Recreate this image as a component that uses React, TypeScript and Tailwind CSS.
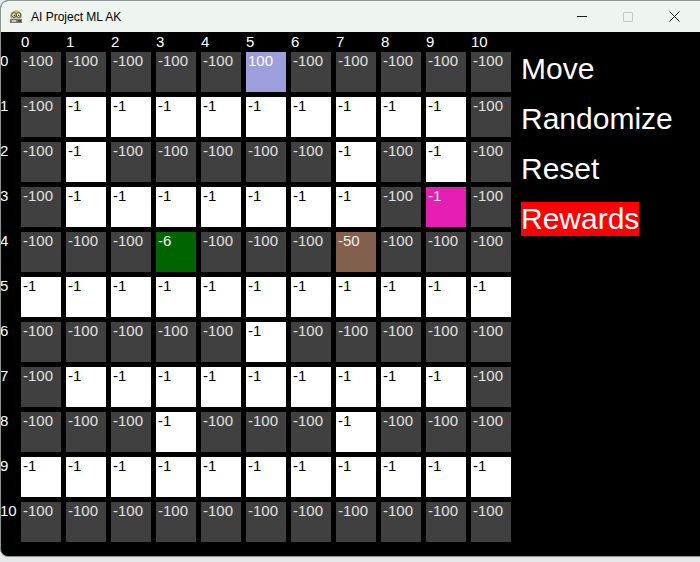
import React from "react";

const grid: number[][] = [
  [-100, -100, -100, -100, -100, 100, -100, -100, -100, -100, -100],
  [-100, -1, -1, -1, -1, -1, -1, -1, -1, -1, -100],
  [-100, -1, -100, -100, -100, -100, -100, -1, -100, -1, -100],
  [-100, -1, -1, -1, -1, -1, -1, -1, -100, -1, -100],
  [-100, -100, -100, -6, -100, -100, -100, -50, -100, -100, -100],
  [-1, -1, -1, -1, -1, -1, -1, -1, -1, -1, -1],
  [-100, -100, -100, -100, -100, -1, -100, -100, -100, -100, -100],
  [-100, -1, -1, -1, -1, -1, -1, -1, -1, -1, -100],
  [-100, -100, -100, -1, -100, -100, -100, -1, -100, -100, -100],
  [-1, -1, -1, -1, -1, -1, -1, -1, -1, -1, -1],
  [-100, -100, -100, -100, -100, -100, -100, -100, -100, -100, -100],
];

// special squares (agent, goal, etc)
const specials: Record<string, string> = {
  "0-5": "bg-[#9c9fdb] text-white",
  "3-9": "bg-[#e61eb4] text-[#f2f2f2]",
  "4-3": "bg-[#006400] text-white",
  "4-7": "bg-[#82604d] text-[#eeeeee]",
};

const cellClass = (r: number, c: number, v: number) => {
  const key = `${r}-${c}`;
  if (specials[key]) return specials[key];
  return v === -1 ? "bg-white text-black" : "bg-[#404040] text-[#e0e0e0]";
};

const PygameIcon = () => (
  <svg width="16" height="16" viewBox="0 0 16 16">
    <path d="M3 9 C2 5 4 2 8 2 C12 2 14 5 13 9 Z" fill="#f2d21b" stroke="#8a7410" strokeWidth="0.6" />
    <circle cx="6" cy="6" r="2.3" fill="#fff" stroke="#333" strokeWidth="0.9" />
    <circle cx="10.5" cy="6" r="2.3" fill="#fff" stroke="#333" strokeWidth="0.9" />
    <circle cx="6.3" cy="6.2" r="0.8" fill="#222" />
    <circle cx="10.7" cy="6.2" r="0.8" fill="#222" />
    <path d="M2 10 H14 V14 H2 Z" fill="#7a7a6e" />
    <path d="M4 11 H8 V13 H4 Z" fill="#c9c9b8" />
    <path d="M10 11 H13 V13 H10 Z" fill="#4b4b44" />
  </svg>
);

const TitleBar = () => (
  <div className="h-[31px] flex items-center bg-[#eef4f0] shrink-0">
    <div className="ml-[7px] flex items-center">
      <PygameIcon />
    </div>
    <span className="ml-[7px] text-[12px] text-black">AI Project ML AK</span>
    <div className="ml-auto flex h-full mr-[14px]">
      <div className="w-[46px] flex items-center justify-center">
        <div className="w-[10px] h-[1px] bg-[#1a1a1a]" />
      </div>
      <div className="w-[46px] flex items-center justify-center">
        <div className="w-[10px] h-[10px] border border-[#c4c8c6] rounded-[1px]" />
      </div>
      <div className="w-[46px] flex items-center justify-center">
        <svg width="11" height="11" viewBox="0 0 11 11">
          <path d="M0.5 0.5 L10.5 10.5 M10.5 0.5 L0.5 10.5" stroke="#1a1a1a" strokeWidth="1" />
        </svg>
      </div>
    </div>
  </div>
);

const menuItems = ["Move", "Randomize", "Reset", "Rewards"];

export default function App() {
  return (
    <div className="w-[700px] h-[562px] overflow-hidden bg-[#e6e8e9] font-['Liberation_Sans',Arial,sans-serif]">
      <div className="w-[712px] h-[557px] rounded-lg overflow-hidden border border-[#8a9490] flex flex-col bg-black">
        <TitleBar />
        <div className="flex items-start pt-[1px]">
          <div className="grid grid-cols-[15px_repeat(11,40px)] gap-[5px] text-[15px] leading-[17px]">
            <div className="h-[14px]" />
            {grid[0].map((_, c) => (
              <div key={c} className="h-[14px] text-white">{c}</div>
            ))}
            {grid.map((row, r) => (
              <React.Fragment key={r}>
                <div className="h-[40px] text-white -ml-[1px]">{r}</div>
                {row.map((v, c) => (
                  <div key={c} className={`h-[40px] w-[40px] pl-[2px] ${cellClass(r, c, v)}`}>
                    {v}
                  </div>
                ))}
              </React.Fragment>
            ))}
          </div>
          <div className="ml-[10px] mt-[19px] flex flex-col gap-[16px]">
            {menuItems.map((m) => (
              <div
                key={m}
                className={`text-[30px] leading-[34px] text-white w-fit ${m === "Rewards" ? "bg-[#ff0000]" : ""}`}
              >
                {m}
              </div>
            ))}
          </div>
        </div>
      </div>
    </div>
  );
}
